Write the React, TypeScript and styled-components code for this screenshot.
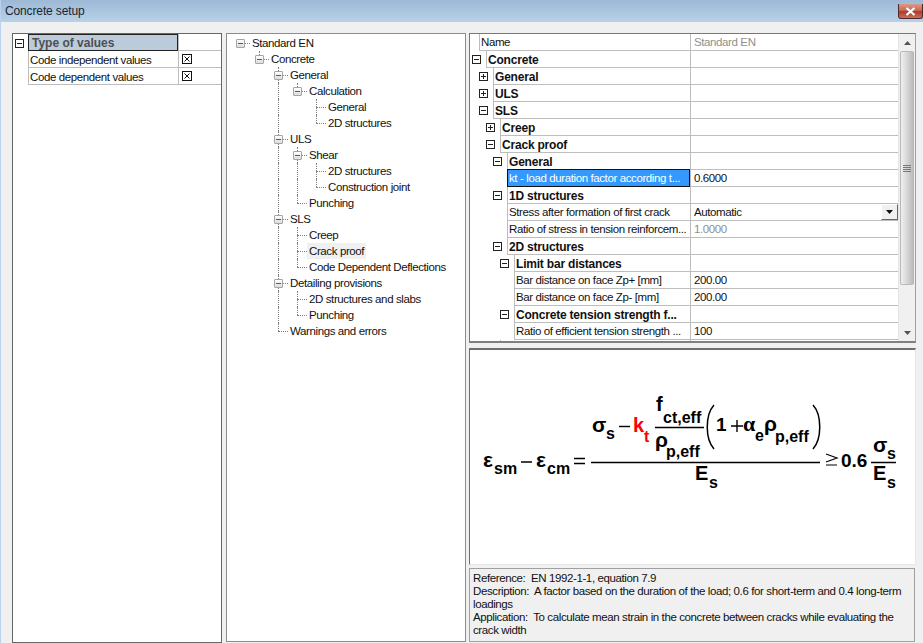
import React from "react";
import styled, { createGlobalStyle } from "styled-components";

const Global = createGlobalStyle`
  * { box-sizing: border-box; }
  html, body { margin: 0; padding: 0; background: #f0f0f0; }
  body { font-family: "Liberation Sans", Arial, sans-serif; font-size: 11.5px; letter-spacing: -0.39px; color: #111; overflow: hidden; }
`;

const Window = styled.div`
  width: 923px; height: 643px; display: flex; flex-direction: column; overflow: hidden;
  background: #f0f0f0; border-left: 1px solid #b9d3ee;
`;
const TitleBar = styled.header`
  height: 22px; flex: none; display: flex; align-items: flex-start; justify-content: space-between;
  padding: 4px 0 0 4px;
  background: linear-gradient(to bottom, #9db9d6 0%, #a9c4de 45%, #b9d1e8 100%);
`;
const Title = styled.span`
  font-size: 12px; letter-spacing: -0.13px; line-height: 15px; color: #1c2430;
`;
const CloseButton = styled.div`
  width: 25px; height: 15px; display: flex; align-items: center; justify-content: center;
  border: 1px solid #4f2a2a; border-top-width: 0; border-radius: 0 0 3px 3px;
  background: linear-gradient(to bottom, #dc9a88 0%, #c96a55 45%, #b03a28 55%, #c8705c 100%);
`;
const Body = styled.div`
  flex: 1; display: flex; align-items: flex-start; padding: 11px 0 0 11px;
`;

/* left panel */
const TypePanel = styled.section`
  width: 210px; height: 610px; flex: none; background: #fff; border: 1px solid #666;
`;
const TypeRow = styled.div`
  display: flex; height: 17px; align-items: stretch;
`;
const TypeGutter = styled.div`
  width: 15px; flex: none; padding: 4px 0 0 2px;
`;
const TypeName = styled.div<{ $head?: boolean }>`
  width: 150px; flex: none; display: flex; align-items: center;
  padding: ${p => (p.$head ? "0 0 0 3px" : "1px 0 0 1px")}; white-space: nowrap;
  border-left: 1px solid ${p => (p.$head ? "#222" : "#bdbdbd")};
  border-bottom: 1px solid ${p => (p.$head ? "#222" : "#bdbdbd")};
  border-top: ${p => (p.$head ? "1px solid #222" : "0")};
  border-right: ${p => (p.$head ? "1px solid #222" : "0")};
  background: ${p => (p.$head ? "#bccbd9" : "#fff")};
  color: ${p => (p.$head ? "#4c4f55" : "#111")};
  font-weight: ${p => (p.$head ? 700 : 400)};
  font-size: ${p => (p.$head ? "12px" : "inherit")};
  letter-spacing: ${p => (p.$head ? "0" : "inherit")};
`;
const TypeValue = styled.div`
  flex: 1; display: flex; align-items: center; padding-left: 3px;
  border-left: 1px solid #bdbdbd; border-bottom: 1px solid #bdbdbd;
`;

/* tree panel */
const TreePanel = styled.nav`
  width: 240px; height: 609px; flex: none; margin-left: 4px; background: #fff;
  border: 1px solid #8c8c8c; padding-top: 1px;
`;
const TreeRow = styled.div`
  display: flex; height: 16px; align-items: stretch; padding-left: 4px; white-space: nowrap;
`;
const Guide = styled.span<{ $pipe?: boolean }>`
  width: 19px; flex: none; position: relative;
  ${p => p.$pipe ? `&::before { content: ""; position: absolute; left: 9px; top: 0; bottom: 0; border-left: 1px dotted #808080; }` : ""}
`;
const Connector = styled.span<{ $up?: boolean; $down?: boolean; $right?: boolean }>`
  width: 21px; flex: none; position: relative;
  &::before {
    content: ""; position: absolute; left: 9px; border-left: 1px dotted #808080;
    top: ${p => (p.$up ? "0" : "8px")}; bottom: ${p => (p.$down ? "0" : "8px")};
  }
  &::after {
    content: ""; position: absolute; left: 9px; top: 8px; width: 10px; border-top: 1px dotted #808080;
  }
`;
const TreeToggle = styled.span`
  position: absolute; left: 5px; top: 4px; width: 9px; height: 9px; z-index: 1;
  border: 1px solid #a5a5a5; border-radius: 1px;
  background: linear-gradient(to bottom, #fff, #dcdcdc);
  &::after { content: ""; position: absolute; left: 1px; right: 1px; top: 3px; height: 1px; background: #3f5a9a; }
`;
const TreeLabel = styled.span<{ $selected?: boolean }>`
  align-self: center; height: 16px; line-height: 16px; padding: 0 2px; margin-left: -2px;
  background: ${p => (p.$selected ? "#f0f0f0" : "transparent")};
`;

/* right column */
const RightColumn = styled.div`
  width: 447px; flex: none; margin-left: 3px; display: flex; flex-direction: column;
`;
const PropsPanel = styled.section`
  height: 310px; display: flex; background: #fff; overflow: hidden;
  border: 1px solid #777; border-bottom: 2px solid #808080; border-right-color: #a0a0a0;
`;
const PropsTable = styled.div`
  width: 428px; flex: none; overflow: hidden;
`;
const PropRow = styled.div`
  display: flex; height: 17px; align-items: stretch; white-space: nowrap;
`;
const PropGutter = styled.div<{ $width: number }>`
  width: ${p => p.$width}px; flex: none; position: relative;
`;
const PropToggle = styled.span<{ $open: boolean }>`
  position: absolute; right: 5px; top: 4px; width: 9px; height: 9px; border: 1px solid #222; background: #fff;
  &::before { content: ""; position: absolute; left: 1px; right: 1px; top: 3px; height: 1px; background: #222; }
  ${p => p.$open ? "" : `&::after { content: ""; position: absolute; top: 1px; bottom: 1px; left: 3px; width: 1px; background: #222; }`}
`;
const PropName = styled.div<{ $bold?: boolean; $selected?: boolean }>`
  flex: 1; min-width: 0; display: flex; align-items: center;
  padding: ${p => (p.$bold ? "1px 0 0 1px" : "0 0 0 1px")};
  border-left: 1px solid ${p => (p.$selected ? "#111" : "#bdbdbd")};
  border-bottom: 1px solid ${p => (p.$selected ? "#111" : "#bdbdbd")};
  ${p => p.$selected ? "border-top: 1px solid #111; border-right: 1px solid #111; margin-top: -1px; height: 18px;" : ""}
  background: ${p => (p.$selected ? "#3399ff" : "#fff")};
  color: ${p => (p.$selected ? "#fff" : "#111")};
  font-weight: ${p => (p.$bold ? 700 : 400)};
  font-size: ${p => (p.$bold ? "12px" : "inherit")};
  letter-spacing: ${p => (p.$bold ? "-0.2px" : "inherit")};
`;
const PropValue = styled.div<{ $muted?: boolean }>`
  width: 208px; flex: none; display: flex; align-items: center; justify-content: space-between;
  padding-left: 3px; border-left: 1px solid #bdbdbd; border-bottom: 1px solid #bdbdbd;
  color: ${p => (p.$muted ? "#8f8f8f" : "#111")};
`;
const DropButton = styled.span`
  width: 17px; height: 16px; display: flex; align-items: center; justify-content: center;
  background: #f0f0f0; border: 1px solid; border-color: #fff #666 #666 #fff;
`;
const ScrollBar = styled.div`
  flex: 1; display: flex; flex-direction: column; align-items: stretch; background: #f0f0f0;
  border-left: 1px solid #e4e4e4;
`;
const ScrollArrow = styled.div`
  height: 17px; flex: none; display: flex; align-items: center; justify-content: center;
`;
const ScrollThumb = styled.div`
  height: 234px; flex: none; margin: 0 1px; display: flex; align-items: center; justify-content: center;
  border: 1px solid #b8b8b8; border-radius: 2px;
  background: linear-gradient(to right, #f0f0f0, #dcdcdc 40%, #bdbdbd 95%);
`;
const ScrollTrack = styled.div`flex: 1;`;

const FormulaPanel = styled.section`
  height: 217px; margin-top: 5px; background: #fff;
  border-top: 2px solid #6e6e6e; border-left: 1px solid #6e6e6e;
  border-right: 1px solid #e8e8e8; border-bottom: 1px solid #e8e8e8;
`;
const FormulaSvg = styled.svg`
  display: block; width: 100%; height: 100%;
  text { font-family: "Liberation Sans", Arial, sans-serif; font-weight: 700; letter-spacing: 0; fill: #000; }
  .main { font-size: 20px; }
  .num { font-size: 19px; }
  .greek { font-size: 21px; }
  .sub { font-size: 16px; }
  .red { fill: #f00; }
  .serif { font-family: "Liberation Serif", serif; font-size: 22px; }
`;
const InfoPanel = styled.section`
  height: 74px; width: 446px; margin-top: 3px; padding: 3px 4px 0 3px;
  border: 1px solid #a0a0a0; background: #f0f0f0; line-height: 13px; font-size: 11.5px; color: #111;
`;
const InfoLine = styled.div``;

type Node = { label: string; children?: Node[]; selected?: boolean };
const tree: Node = {
  label: "Standard EN",
  children: [{
    label: "Concrete",
    children: [
      { label: "General", children: [{ label: "Calculation", children: [{ label: "General" }, { label: "2D structures" }] }] },
      { label: "ULS", children: [
        { label: "Shear", children: [{ label: "2D structures" }, { label: "Construction joint" }] },
        { label: "Punching" },
      ] },
      { label: "SLS", children: [{ label: "Creep" }, { label: "Crack proof", selected: true }, { label: "Code Dependent Deflections" }] },
      { label: "Detailing provisions", children: [{ label: "2D structures and slabs" }, { label: "Punching" }] },
      { label: "Warnings and errors" },
    ],
  }],
};

function renderTree(node: Node, pipes: boolean[], isRoot: boolean, isLast: boolean, out: React.ReactNode[]) {
  out.push(
    <TreeRow key={out.length}>
      {pipes.map((p, i) => <Guide key={i} $pipe={p} />)}
      <Connector $up={!isRoot} $down={!isLast && !isRoot}>
        {node.children && <TreeToggle />}
      </Connector>
      <TreeLabel $selected={node.selected}>{node.label}</TreeLabel>
    </TreeRow>
  );
  const next = [...pipes, !isRoot && !isLast];
  node.children?.forEach((c, i) => renderTree(c, next, false, i === node.children!.length - 1, out));
}

type Prop = { label: string; gutter: number; toggle?: "open" | "closed"; bold?: boolean; value?: string; muted?: boolean; selected?: boolean; drop?: boolean };
const props: Prop[] = [
  { label: "Name", gutter: 9, value: "Standard EN", muted: true },
  { label: "Concrete", gutter: 16, toggle: "open", bold: true },
  { label: "General", gutter: 23, toggle: "closed", bold: true },
  { label: "ULS", gutter: 23, toggle: "closed", bold: true },
  { label: "SLS", gutter: 23, toggle: "open", bold: true },
  { label: "Creep", gutter: 30, toggle: "closed", bold: true },
  { label: "Crack proof", gutter: 30, toggle: "open", bold: true },
  { label: "General", gutter: 37, toggle: "open", bold: true },
  { label: "kt - load duration factor according t...", gutter: 37, value: "0.6000", selected: true },
  { label: "1D structures", gutter: 37, toggle: "open", bold: true },
  { label: "Stress after formation of first crack", gutter: 37, value: "Automatic", drop: true },
  { label: "Ratio of stress in tension reinforcem...", gutter: 37, value: "1.0000", muted: true },
  { label: "2D structures", gutter: 37, toggle: "open", bold: true },
  { label: "Limit bar distances", gutter: 44, toggle: "open", bold: true },
  { label: "Bar distance on face Zp+ [mm]", gutter: 44, value: "200.00" },
  { label: "Bar distance on face Zp- [mm]", gutter: 44, value: "200.00" },
  { label: "Concrete tension strength f...", gutter: 44, toggle: "open", bold: true },
  { label: "Ratio of efficient tension strength ...", gutter: 44, value: "100" },
  { label: "", gutter: 30 },
];

const CheckBox = () => (
  <svg width="10" height="10" viewBox="0 0 10 10">
    <rect x="0.5" y="0.5" width="9" height="9" fill="#fff" stroke="#111" />
    <path d="M2.5 2.5l5 5M7.5 2.5l-5 5" stroke="#111" fill="none" />
  </svg>
);
const Arrow = ({ up, color = "#555" }: { up?: boolean; color?: string }) => (
  <svg width="7" height="4" viewBox="0 0 7 4">
    <path d={up ? "M3.5 0L7 4H0z" : "M0 0h7L3.5 4z"} fill={color} />
  </svg>
);

const Formula = () => (
  <FormulaSvg viewBox="470 350 445 214" preserveAspectRatio="xMinYMin meet">
    <text className="greek" x="483" y="467">ε</text>
    <text className="sub" x="494" y="474">sm</text>
    <path d="M521 462h11M574 458.500h11M574 463.500h11" stroke="#000" strokeWidth="1.4" />
    <text className="greek" x="536" y="467">ε</text>
    <text className="sub" x="547" y="474">cm</text>
    <path d="M591 462.500h229M655 427.500h49M871 462.500h25" stroke="#000" strokeWidth="1.4" />
    <text className="greek" x="592" y="432">σ</text>
    <text className="sub" x="606" y="439">s</text>
    <path d="M619 426.500h11" stroke="#000" strokeWidth="1.4" />
    <text className="main red" x="633" y="432">k</text>
    <text className="sub red" x="644" y="442">t</text>
    <text className="main" x="656" y="411">f</text>
    <text className="sub" x="663" y="423">ct,eff</text>
    <text className="greek" x="655" y="447">ρ</text>
    <text className="sub" x="666" y="457">p,eff</text>
    <path d="M714 405C705 415 705 439 714 449M813 405C822 415 822 439 813 449" stroke="#000" strokeWidth="1.5" fill="none" />
    <text className="num" x="716" y="431">1</text>
    <path d="M731 426h12M737 420v12" stroke="#000" strokeWidth="1.4" />
    <text className="serif" x="743" y="431">α</text>
    <text className="sub" x="755" y="441">e</text>
    <text className="greek" x="764" y="431">ρ</text>
    <text className="sub" x="775" y="442">p,eff</text>
    <text className="main" x="695" y="480">E</text>
    <text className="sub" x="709" y="488">s</text>
    <path d="M826 454l11 4-11 4M826 465h11" stroke="#000" strokeWidth="1.2" fill="none" />
    <text className="num" x="841" y="467">0.6</text>
    <text className="greek" x="873" y="452">σ</text>
    <text className="sub" x="887" y="459">s</text>
    <text className="main" x="873" y="480">E</text>
    <text className="sub" x="887" y="488">s</text>
  </FormulaSvg>
);

export default function App() {
  const rows: React.ReactNode[] = [];
  renderTree(tree, [], true, true, rows);
  return (
    <Window>
      <Global />
      <TitleBar>
        <Title>Concrete setup</Title>
        <CloseButton>
          <svg width="11" height="9" viewBox="0 0 11 9">
            <path d="M1.500 1l8 7M9.500 1l-8 7" stroke="#fff" strokeWidth="2.200" />
          </svg>
        </CloseButton>
      </TitleBar>
      <Body>
        <TypePanel>
          <TypeRow>
            <TypeGutter>
              <svg width="9" height="9" viewBox="0 0 9 9"><rect x="0.5" y="0.5" width="8" height="8" fill="#fff" stroke="#222" /><path d="M2 4.500h5" stroke="#222" /></svg>
            </TypeGutter>
            <TypeName $head>Type of values</TypeName>
            <TypeValue />
          </TypeRow>
          <TypeRow>
            <TypeGutter />
            <TypeName>Code independent values</TypeName>
            <TypeValue><CheckBox /></TypeValue>
          </TypeRow>
          <TypeRow>
            <TypeGutter />
            <TypeName>Code dependent values</TypeName>
            <TypeValue><CheckBox /></TypeValue>
          </TypeRow>
        </TypePanel>
        <TreePanel>{rows}</TreePanel>
        <RightColumn>
          <PropsPanel>
            <PropsTable>
              {props.map((p, i) => (
                <PropRow key={i}>
                  <PropGutter $width={p.gutter}>
                    {p.toggle && <PropToggle $open={p.toggle === "open"} />}
                  </PropGutter>
                  <PropName $bold={p.bold} $selected={p.selected}>{p.label}</PropName>
                  <PropValue $muted={p.muted}>
                    {p.value}
                    {p.drop && <DropButton><Arrow color="#111" /></DropButton>}
                  </PropValue>
                </PropRow>
              ))}
            </PropsTable>
            <ScrollBar>
              <ScrollArrow><Arrow up /></ScrollArrow>
              <ScrollThumb>
                <svg width="8" height="8" viewBox="0 0 8 8"><path d="M0 1.500h8M0 3.500h8M0 5.500h8M0 7.500h8" stroke="#777" /></svg>
              </ScrollThumb>
              <ScrollTrack />
              <ScrollArrow><Arrow /></ScrollArrow>
            </ScrollBar>
          </PropsPanel>
          <FormulaPanel><Formula /></FormulaPanel>
          <InfoPanel>
            <InfoLine>Reference:&nbsp; EN 1992-1-1, equation 7.9</InfoLine>
            <InfoLine>Description:&nbsp; A factor based on the duration of the load; 0.6 for short-term and 0.4 long-term loadings</InfoLine>
            <InfoLine>Application:&nbsp; To calculate mean strain in the concrete between cracks while evaluating the crack width</InfoLine>
          </InfoPanel>
        </RightColumn>
      </Body>
    </Window>
  );
}
